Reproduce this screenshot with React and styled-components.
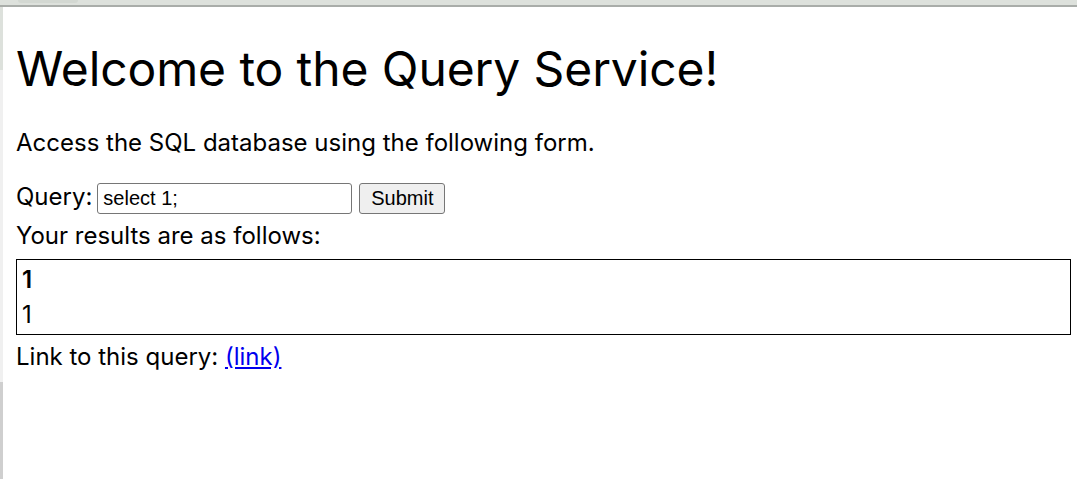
import React from "react";
import styled, { createGlobalStyle } from "styled-components";

const Global = createGlobalStyle`
  html, body { margin: 0; padding: 0; background: #ffffff; }
  body { font-family: Inter, "Noto Sans", sans-serif; color: #000; font-size: 24px; }
`;

const Frame = styled.div`
  display: flex;
  flex-direction: column;
  height: 479px;
  width: 1077px;
  overflow: hidden;
`;

const TopBar = styled.div`
  height: 5px;
  background: #dde1dc;
  border-bottom: 2px solid #a9ada9;
  flex: none;
  position: relative;
`;

const Tab = styled.div`
  position: absolute;
  left: 18px;
  top: 0;
  width: 60px;
  height: 3px;
  background: #d3d8d2;
  border-radius: 0 0 10px 10px;
`;

const Body = styled.div`
  flex: 1;
  display: flex;
`;

const SideStrip = styled.div`
  width: 3px;
  flex: none;
  background: linear-gradient(
    to bottom,
    #dde1dc 0px,
    #dde1dc 63px,
    #f0f0f0 63px,
    #f0f0f0 375px,
    #cfcfcf 375px
  );
`;

const Page = styled.main`
  flex: 1;
  padding: 0 6px 0 13px;
  line-height: 29px;
`;

const Title = styled.h1`
  font-size: 48px;
  font-weight: 400;
  line-height: 58px;
  letter-spacing: -0.1px;
  margin: 33px 0 30px;
`;

const Para = styled.p`
  margin: 0 0 25px;
`;

const Form = styled.form`
  display: flex;
  align-items: baseline;
`;

const Label = styled.label`
  margin-right: 5px;
`;

const Input = styled.input`
  font-family: "Liberation Sans", Arial, sans-serif;
  font-size: 20px;
  width: 255px;
  height: 31px;
  box-sizing: border-box;
  border: 1px solid #767676;
  border-radius: 3px;
  padding: 1px 5px;
  margin: 0 7px 0 0;
`;

const Button = styled.button`
  font-family: "Liberation Sans", Arial, sans-serif;
  font-size: 20px;
  height: 31px;
  width: 86px;
  box-sizing: border-box;
  border: 1px solid #767676;
  border-radius: 3px;
  background: #efefef;
  color: #000;
  padding: 0;
`;

const Line = styled.div`
  margin-top: ${(p) => p.$top || 0}px;
`;

const Results = styled.div`
  border: 1px solid #000;
  margin-top: 9px;
  padding: 2px 5px;
`;

const Cell = styled.div`
  font-weight: ${(p) => (p.$head ? 600 : 400)};
  line-height: 35px;
  height: 35px;
`;

const Link = styled.a`
  color: #0000ee;
  text-decoration: underline;
`;

export default function App() {
  return (
    <Frame>
      <Global />
      <TopBar>
        <Tab />
      </TopBar>
      <Body>
        <SideStrip />
        <Page>
          <Title>Welcome to the Query Service!</Title>
          <Para>Access the SQL database using the following form.</Para>
          <Form onSubmit={(e) => e.preventDefault()}>
            <Label htmlFor="q">Query:</Label>
            <Input id="q" defaultValue="select 1;" />
            <Button type="submit">Submit</Button>
          </Form>
          <Line $top={7}>Your results are as follows:</Line>
          <Results>
            <Cell $head>1</Cell>
            <Cell>1</Cell>
          </Results>
          <Line $top={7}>
            Link to this query: <Link href="#">(link)</Link>
          </Line>
        </Page>
      </Body>
    </Frame>
  );
}
